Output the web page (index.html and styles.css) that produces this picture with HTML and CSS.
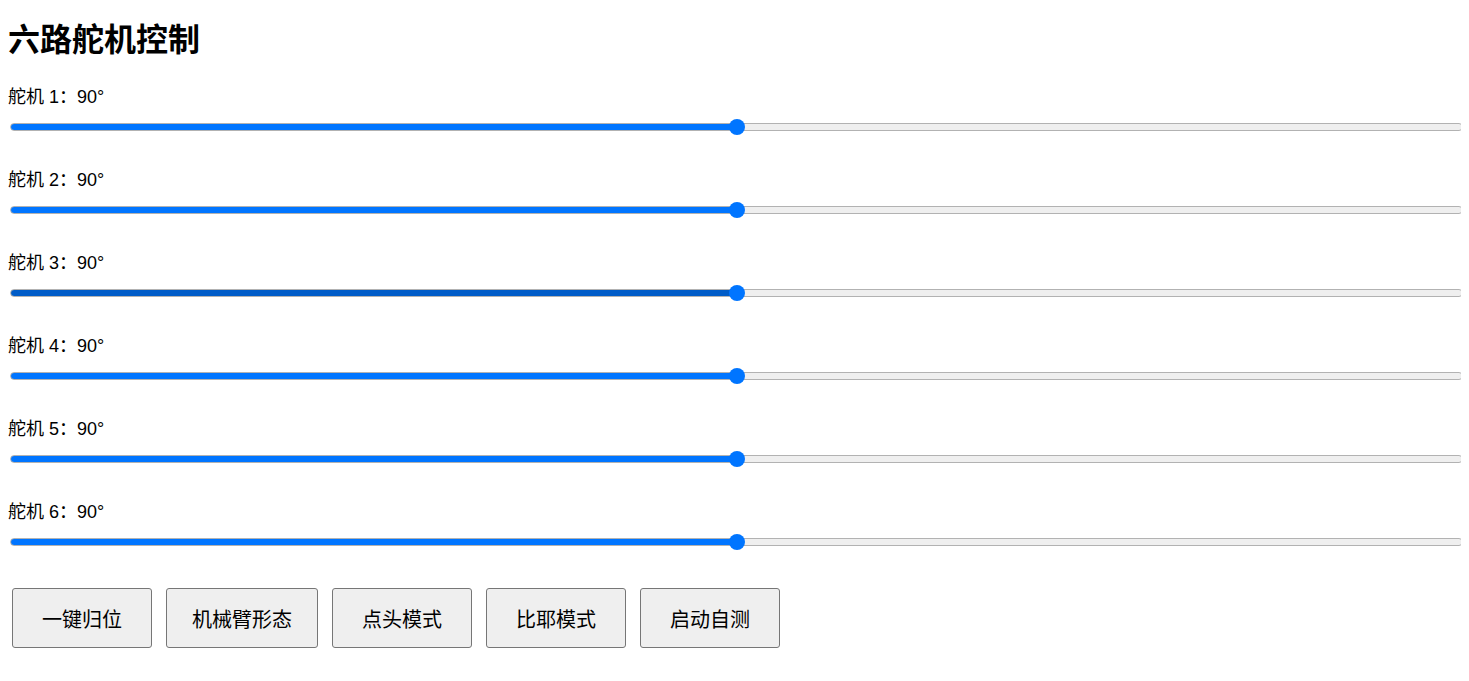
FILE: index.html
```html
<!DOCTYPE html>
<html lang="zh-CN">
    <head>
        <meta charset="utf-8">
        <title>六路舵机控制</title>
        <link rel="stylesheet" href="styles.css">
    </head>
    <body>
        <h1>六路舵机控制</h1>

        <div class="servo">
            <label class="servo-label">舵机 1：<span>90</span>°</label>
            <input class="servo-range" type="range" min="0" max="180" value="90" style="--fill: 50%">
        </div>
        <div class="servo">
            <label class="servo-label">舵机 2：<span>90</span>°</label>
            <input class="servo-range" type="range" min="0" max="180" value="90" style="--fill: 50%">
        </div>
        <div class="servo">
            <label class="servo-label">舵机 3：<span>90</span>°</label>
            <input class="servo-range hover" type="range" min="0" max="180" value="90" style="--fill: 50%">
        </div>
        <div class="servo">
            <label class="servo-label">舵机 4：<span>90</span>°</label>
            <input class="servo-range" type="range" min="0" max="180" value="90" style="--fill: 50%">
        </div>
        <div class="servo">
            <label class="servo-label">舵机 5：<span>90</span>°</label>
            <input class="servo-range" type="range" min="0" max="180" value="90" style="--fill: 50%">
        </div>
        <div class="servo">
            <label class="servo-label">舵机 6：<span>90</span>°</label>
            <input class="servo-range" type="range" min="0" max="180" value="90" style="--fill: 50%">
        </div>

        <div class="actions">
            <button class="btn">一键归位</button>
            <button class="btn">机械臂形态</button>
            <button class="btn">点头模式</button>
            <button class="btn">比耶模式</button>
            <button class="btn">启动自测</button>
        </div>
    </body>
</html>
```

FILE: styles.css
```css
body {
    margin: 8px;
    font-family: "Liberation Sans", "Noto Sans CJK SC", sans-serif;
    color: #000;
    background: #fff;
}

h1 {
    margin: 13px 0 27px;
    font-size: 32px;
    line-height: 38px;
    font-weight: bold;
}

.servo {
    padding-bottom: 34px;
}

.servo-label {
    display: block;
    font-size: 18px;
    line-height: 22px;
    margin-bottom: 11px;
}

/* 自定义 range 样式, 用 --fill 控制已选部分的长度 */
.servo-range {
    -webkit-appearance: none;
    appearance: none;
    display: block;
    width: 100%;
    height: 16px;
    margin: 0 2px;
    padding: 0;
    background: transparent;
    --blue: #0075ff;
}

.servo-range.hover {
    --blue: #005cc8;
}

.servo-range::-webkit-slider-runnable-track {
    height: 8px;
    border-radius: 4px;
    box-sizing: border-box;
    border: 1px solid #b2b2b2;
    background: linear-gradient(to right, var(--blue) var(--fill), #efefef var(--fill));
}

.servo-range::-webkit-slider-thumb {
    -webkit-appearance: none;
    width: 16px;
    height: 16px;
    margin-top: -5px;
    border-radius: 50%;
    background: #0075ff;
    border: none;
}

.actions {
    display: flex;
    gap: 14px;
    margin-top: 4px;
    padding-left: 4px;
}

.btn {
    min-width: 140px;
    height: 60px;
    padding: 0 25px;
    font-family: "Liberation Sans", "Noto Sans CJK SC", sans-serif;
    font-size: 20px;
    color: #000;
    background: #efefef;
    border: 1px solid #767676;
    border-radius: 3px;
}
```
